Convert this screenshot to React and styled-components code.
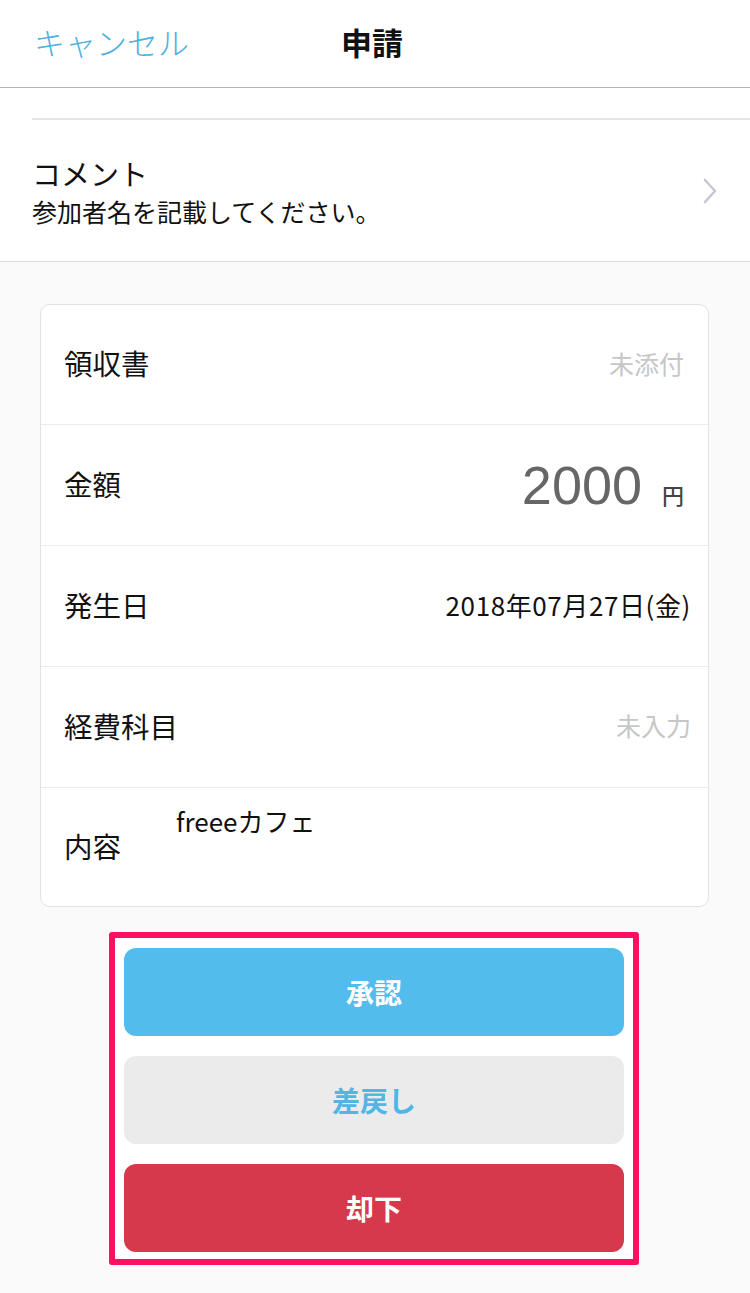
import React from "react";
import styled, { createGlobalStyle } from "styled-components";

const GlobalStyle = createGlobalStyle`
  html, body {
    margin: 0;
    padding: 0;
    background: #fafafa;
    font-family: "Liberation Sans", "Noto Sans CJK JP", sans-serif;
  }
`;

const Page = styled.div`
  width: 750px;
  min-height: 1293px;
  background: #fafafa;
`;

const Header = styled.header`
  height: 87px;
  background: #fff;
  border-bottom: 1px solid #b4b4b4;
  display: grid;
  grid-template-columns: 1fr auto 1fr;
  align-items: center;
`;

const Cancel = styled.span`
  padding-left: 34px;
  margin-top: -4px;
  font-size: 31px;
  color: #4fb0dd;
  font-family: "Noto Sans CJK JP", sans-serif;
  font-weight: 300;
`;

const Title = styled.h1`
  margin: -4px 0 0 -6px;
  font-size: 31px;
  font-weight: 700;
  color: #111;
  font-family: "Noto Sans CJK JP", sans-serif;
`;

const TopSection = styled.section`
  background: #fff;
  padding-top: 30px;
  border-bottom: 1px solid #dcdcdc;
`;

const CommentRow = styled.div`
  margin-left: 32px;
  border-top: 2px solid #e6e6e6;
  height: 143px;
  display: flex;
  align-items: center;
  justify-content: space-between;
  padding-right: 32px;
  box-sizing: border-box;
`;

const CommentText = styled.div`
  display: flex;
  flex-direction: column;
  font-family: "Noto Sans CJK JP", sans-serif;
`;

const CommentTitle = styled.span`
  font-size: 29px;
  color: #111;
  line-height: 40px;
`;

const CommentBody = styled.span`
  font-size: 25px;
  color: #111;
  line-height: 36px;
`;

const Card = styled.div`
  margin: 42px 41px 0 40px;
  background: #fff;
  border: 1.5px solid #e2e2e2;
  border-radius: 10px;
  overflow: hidden;
`;

const Row = styled.div`
  height: 120px;
  display: flex;
  align-items: ${(p) => (p.$top ? "stretch" : "center")};
  justify-content: space-between;
  padding: 0 ${(p) => p.$pr || 24}px 0 23px;
  border-top: 1px solid #ebebeb;
  font-family: "Noto Sans CJK JP", sans-serif;

  &:first-child {
    border-top: none;
    height: 119px;
  }
  &:last-child {
    height: 118px;
  }
`;

const Label = styled.span`
  font-size: 28.5px;
  color: #111;
  align-self: center;
  margin-top: -4px;
  width: ${(p) => (p.$w ? `${p.$w}px` : "auto")};
  flex-shrink: 0;
`;

const Muted = styled.span`
  font-size: 25px;
  color: #c6c6c6;
  margin-top: -4px;
`;

const Amount = styled.div`
  display: flex;
  align-items: baseline;
  gap: 20px;
  color: #666;
`;

const AmountNum = styled.span`
  font-family: "Liberation Sans", sans-serif;
  font-size: 54px;
`;

const Yen = styled.span`
  font-size: 22px;
  color: #444;
  font-weight: 500;
`;

const DateText = styled.span`
  font-size: 26px;
  color: #111;
  letter-spacing: 0.6px;
  margin-top: -4px;
`;

const Content = styled.span`
  flex: 1;
  font-size: 26px;
  color: #111;
  padding-top: 16px;
  line-height: 34px;
`;

const Frame = styled.div`
  margin: 25px 0 0 109px;
  width: 530px;
  box-sizing: border-box;
  border: 6px solid #fc1060;
  border-radius: 3px;
  background: #fff;
  padding: 10px 9px 7px;
  display: flex;
  flex-direction: column;
  gap: 20px;
`;

const Button = styled.button`
  height: 88px;
  border: none;
  border-radius: 12px;
  background: ${(p) => p.$bg};
  color: ${(p) => p.$fg};
  font-size: 28px;
  font-weight: 700;
  font-family: "Noto Sans CJK JP", sans-serif;
`;

const Chevron = () => (
  <svg width="16" height="26" viewBox="0 0 16 26">
    <path d="M3 2 L13 13 L3 24" fill="none" stroke="#c7c7d1" strokeWidth="2.6" strokeLinecap="round" strokeLinejoin="round" />
  </svg>
);

export default function App() {
  return (
    <Page>
      <GlobalStyle />
      <Header>
        <Cancel>キャンセル</Cancel>
        <Title>申請</Title>
        <span />
      </Header>
      <TopSection>
        <CommentRow>
          <CommentText>
            <CommentTitle>コメント</CommentTitle>
            <CommentBody>参加者名を記載してください。</CommentBody>
          </CommentText>
          <Chevron />
        </CommentRow>
      </TopSection>
      <Card>
        <Row>
          <Label>領収書</Label>
          <Muted>未添付</Muted>
        </Row>
        <Row>
          <Label>金額</Label>
          <Amount>
            <AmountNum>2000</AmountNum>
            <Yen>円</Yen>
          </Amount>
        </Row>
        <Row $pr={17}>
          <Label>発生日</Label>
          <DateText>2018年07月27日(金)</DateText>
        </Row>
        <Row $pr={17}>
          <Label>経費科目</Label>
          <Muted>未入力</Muted>
        </Row>
        <Row $top>
          <Label $w={112}>内容</Label>
          <Content>freeeカフェ</Content>
        </Row>
      </Card>
      <Frame>
        <Button $bg="#52bdec" $fg="#fff">承認</Button>
        <Button $bg="#ebebeb" $fg="#52b5e5">差戻し</Button>
        <Button $bg="#d6394b" $fg="#fff">却下</Button>
      </Frame>
    </Page>
  );
}
